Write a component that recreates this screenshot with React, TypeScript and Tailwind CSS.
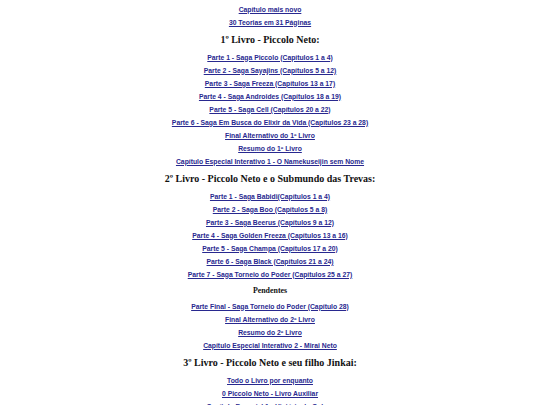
import React from "react";

const L = ({ t }: { t: string }) => (
  <div className="h-[13px] leading-[13px] text-center text-[6.8px] font-bold">
    <a href="#" className="text-[#28288f] underline">
      {t}
    </a>
  </div>
);

const H = ({ t }: { t: string }) => (
  <div className="h-[22px] leading-[22px] text-center font-bold text-[10px] text-[#111] font-['Liberation_Serif','Times_New_Roman',serif]">
    {t}
  </div>
);

export default function App() {
  return (
    <div className="w-[540px] h-[405px] overflow-hidden bg-white pt-[2.5px] font-['Liberation_Sans',Arial,sans-serif]">
      <div className="flex flex-col">
        <L t="Capítulo mais novo" />
        <L t="30 Teorias em 31 Páginas" />
        <H t="1º Livro - Piccolo Neto:" />
        <L t="Parte 1 - Saga Piccolo (Capítulos 1 a 4)" />
        <L t="Parte 2 - Saga Sayajins (Capítulos 5 a 12)" />
        <L t="Parte 3 - Saga Freeza (Capítulos 13 a 17)" />
        <L t="Parte 4 - Saga Androides (Capítulos 18 a 19)" />
        <L t="Parte 5 - Saga Cell (Capítulos 20 a 22)" />
        <L t="Parte 6 - Saga Em Busca do Elixir da Vida (Capítulos 23 a 28)" />
        <L t="Final Alternativo do 1º Livro" />
        <L t="Resumo do 1º Livro" />
        <L t="Capítulo Especial Interativo 1 - O Namekuseijin sem Nome" />
        <H t="2º Livro - Piccolo Neto e o Submundo das Trevas:" />
        <L t="Parte 1 - Saga Babidi(Capítulos 1 a 4)" />
        <L t="Parte 2 - Saga Boo (Capítulos 5 a 8)" />
        <L t="Parte 3 - Saga Beerus (Capítulos 9 a 12)" />
        <L t="Parte 4 - Saga Golden Freeza (Capítulos 13 a 16)" />
        <L t="Parte 5 - Saga Champa (Capítulos 17 a 20)" />
        <L t="Parte 6 - Saga Black (Capítulos 21 a 24)" />
        <L t="Parte 7 - Saga Torneio do Poder (Capítulos 25 a 27)" />
        <div className="h-[19px] leading-[19px] text-center font-bold text-[7.9px] text-[#111] font-['Liberation_Serif','Times_New_Roman',serif]">
          Pendentes
        </div>
        <L t="Parte Final - Saga Torneio do Poder (Capítulo 28)" />
        <L t="Final Alternativo do 2º Livro" />
        <L t="Resumo do 2º Livro" />
        <L t="Capítulo Especial Interativo 2 - Mirai Neto" />
        <H t="3º Livro - Piccolo Neto e seu filho Jinkai:" />
        <L t="Todo o Livro por enquanto" />
        <L t="0 Piccolo Neto - Livro Auxiliar" />
        <L t="Capítulo Especial 1 - História de Gohan" />
      </div>
    </div>
  );
}
